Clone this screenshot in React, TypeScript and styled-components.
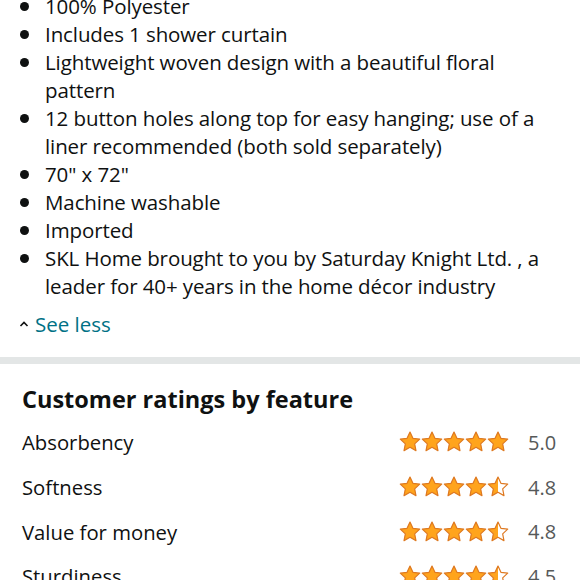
import React from 'react'
import styled, { createGlobalStyle } from 'styled-components'

const Global = createGlobalStyle`
  html, body {
    margin: 0;
    padding: 0;
    background: #fff;
    overflow: hidden;
  }
  body {
    font-family: "Open Sans", "Noto Sans", "Liberation Sans", sans-serif;
    color: #0f1111;
  }
`

const Page = styled.div`
  width: 580px;
  margin-top: -8px;
`

const Details = styled.section`
  padding: 0 22px 0 22px;
`

const BulletList = styled.ul`
  list-style: none;
  margin: 0;
  padding: 0;
`

const Bullet = styled.li`
  position: relative;
  padding-left: 23px;
  font-size: 20.5px;
  line-height: 28px;
  letter-spacing: -0.1px;

  &::before {
    content: '';
    position: absolute;
    left: -2px;
    top: 10px;
    width: 9px;
    height: 9px;
    border-radius: 50%;
    background: #0f1111;
  }
`

const SeeLess = styled.div`
  display: flex;
  align-items: center;
  gap: 5px;
  margin-top: 10px;
  margin-left: -4px;
  height: 28px;
  color: #007185;
  font-size: 20.5px;
`

const Divider = styled.div`
  height: 7px;
  background: #e3e6e6;
  margin-top: 19px;
`

const Ratings = styled.section`
  padding: 18px 22px 0 22px;
`

const Heading = styled.h2`
  margin: 0 0 4px 0;
  font-size: 23.5px;
  font-weight: 700;
  line-height: 34px;
`

const Row = styled.div`
  display: flex;
  align-items: center;
  height: 44.7px;
`

const Feature = styled.div`
  flex: 1;
  font-size: 20.3px;
`

const Stars = styled.div`
  display: flex;
  margin-right: 19px;
`

const Score = styled.div`
  width: 30px;
  font-size: 20px;
  color: #565959;
`

const STAR = 'M12 1.2l3.2 6.8 7.4.9-5.5 5.1 1.4 7.4L12 17.8l-6.5 3.6 1.4-7.4-5.5-5.1 7.4-.9z'

const Star: React.FC<{ fill: number; id: string }> = ({ fill, id }) => (
  <svg width="22" height="22" viewBox="0 0 24 24">
    <defs>
      <linearGradient id={id} x1="0" x2="1" y1="0" y2="0">
        <stop offset={fill} stopColor="#ffa41c" />
        <stop offset={fill} stopColor="#ffffff" />
      </linearGradient>
    </defs>
    <path d={STAR} fill={`url(#${id})`} stroke="#de7921" strokeWidth="1.3" strokeLinejoin="round" />
  </svg>
)

const Rating: React.FC<{ value: number; name: string }> = ({ value, name }) => {
  const fills = [0, 1, 2, 3, 4].map(i => {
    const r = value - i
    if (r >= 0.9) return 1
    if (r >= 0.3) return 0.5
    return 0
  })
  return (
    <Stars>
      {fills.map((f, i) => (
        <Star key={i} fill={f} id={`${name}-${i}`} />
      ))}
    </Stars>
  )
}

const bullets = [
  '100% Polyester',
  'Includes 1 shower curtain',
  'Lightweight woven design with a beautiful floral pattern',
  '12 button holes along top for easy hanging; use of a liner recommended (both sold separately)',
  '70" x 72"',
  'Machine washable',
  'Imported',
  'SKL Home brought to you by Saturday Knight Ltd. , a leader for 40+ years in the home décor industry',
]

const features = [
  { name: 'Absorbency', value: 5.0 },
  { name: 'Softness', value: 4.8 },
  { name: 'Value for money', value: 4.8 },
  { name: 'Sturdiness', value: 4.5 },
]

export default function App() {
  return (
    <Page>
      <Global />
      <Details>
        <BulletList>
          {bullets.map(b => (
            <Bullet key={b}>{b}</Bullet>
          ))}
        </BulletList>
        <SeeLess>
          <svg width="12" height="12" viewBox="0 0 12 12">
            <path d="M2.5 8l3.5-3.5L9.5 8" fill="none" stroke="#0f1111" strokeWidth="1.6" />
          </svg>
          See less
        </SeeLess>
      </Details>
      <Divider />
      <Ratings>
        <Heading>Customer ratings by feature</Heading>
        {features.map(f => (
          <Row key={f.name}>
            <Feature>{f.name}</Feature>
            <Rating value={f.value} name={f.name.replace(/\s/g, '')} />
            <Score>{f.value.toFixed(1)}</Score>
          </Row>
        ))}
      </Ratings>
    </Page>
  )
}
